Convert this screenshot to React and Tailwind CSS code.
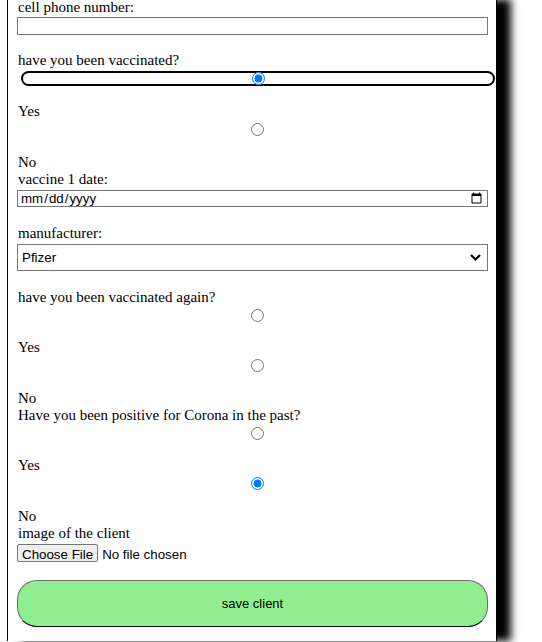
import React, { useState } from "react";

const label = "block ml-[1px] font-['Liberation_Serif','Times_New_Roman',serif] text-[15px] leading-[17px] text-black";
const control = "font-['Liberation_Sans',Arial,sans-serif] text-[13.33px] text-black";

const Radio = ({ name, value, checked, onChange }) => (
  <input
    type="radio"
    name={name}
    value={value}
    checked={checked}
    onChange={onChange}
    className="block w-full h-[13px] ml-[5px] mt-[3px]"
  />
);

const App = () => {
  const [vaccinated, setVaccinated] = useState("yes");
  const [again, setAgain] = useState("");
  const [positive, setPositive] = useState("no");

  return (
    <div className="min-h-[642px] bg-white overflow-hidden">
      <form
        onSubmit={(e) => e.preventDefault()}
        className="ml-[7px] w-[490px] min-h-[642px] bg-white border-x border-black pl-[9px] pr-[8px] shadow-[14px_0_8px_#000]"
      >
        {/* phone */}
        <label className={`${label} -mt-[1px]`}>cell phone number:</label>
        <input type="tel" className={`${control} block w-full h-[18px] mt-[1px] border border-[#767676] px-[2px]`} />

        {/* first dose */}
        <label className={`${label} mt-[17px]`}>have you been vaccinated?</label>
        {/* focused radio: ring drawn round the full-width control */}
        <div className="ml-[4px] w-[474px] h-[15px] mt-[2px] rounded-full border-2 border-black flex items-center justify-center">
          <input
            type="radio"
            name="vaccinated"
            value="yes"
            checked={vaccinated === "yes"}
            onChange={() => setVaccinated("yes")}
            className="w-[13px] h-[13px] shrink-0"
          />
        </div>
        <label className={`${label} mt-[17px]`}>Yes</label>
        <Radio name="vaccinated" value="no" checked={vaccinated === "no"} onChange={() => setVaccinated("no")} />
        <label className={`${label} mt-[18px]`}>No</label>

        <label className={label}>vaccine 1 date:</label>
        <input type="date" className={`${control} block w-full h-[17px] mt-[2px] border border-[#767676] px-[2px]`} />

        <label className={`${label} mt-[18px]`}>manufacturer:</label>
        <div className="relative mt-[2px]">
          <select
            className={`${control} block w-full h-[27px] border border-[#767676] pl-[4px] pr-[24px] appearance-none`}
            defaultValue="Pfizer"
          >
            <option>Pfizer</option>
            <option>Moderna</option>
            <option>AstraZeneca</option>
          </select>
          <svg
            className="absolute right-[7px] top-[10px] w-[11px] h-[7px] pointer-events-none"
            viewBox="0 0 11 7"
            fill="none"
            stroke="#000"
            strokeWidth="2.2"
          >
            <path d="M1 1l4.5 4.5L10 1" />
          </svg>
        </div>

        {/* second dose */}
        <label className={`${label} mt-[18px]`}>have you been vaccinated again?</label>
        <Radio name="again" value="yes" checked={again === "yes"} onChange={() => setAgain("yes")} />
        <label className={`${label} mt-[17px]`}>Yes</label>
        <Radio name="again" value="no" checked={again === "no"} onChange={() => setAgain("no")} />
        <label className={`${label} mt-[18px]`}>No</label>

        {/* corona */}
        <label className={label}>Have you been positive for Corona in the past?</label>
        <Radio name="positive" value="yes" checked={positive === "yes"} onChange={() => setPositive("yes")} />
        <label className={`${label} mt-[17px]`}>Yes</label>
        <Radio name="positive" value="no" checked={positive === "no"} onChange={() => setPositive("no")} />
        <label className={`${label} mt-[18px]`}>No</label>

        <label className={label}>image of the client</label>
        <input
          type="file"
          className={`${control} block mt-[2px] h-[18px] file:h-[18px] file:border file:border-[#767676] file:bg-[#efefef] file:rounded-[2px] file:px-[4px] file:mr-[4px]`}
        />

        <button
          type="submit"
          className="block w-full h-[47px] mt-[18px] rounded-[20px] border border-[#6b6b6b] border-b-black bg-[#90ee90] font-['Liberation_Sans',Arial,sans-serif] text-[13px] text-black"
        >
          save client
        </button>
      </form>
    </div>
  );
};

export default App;
